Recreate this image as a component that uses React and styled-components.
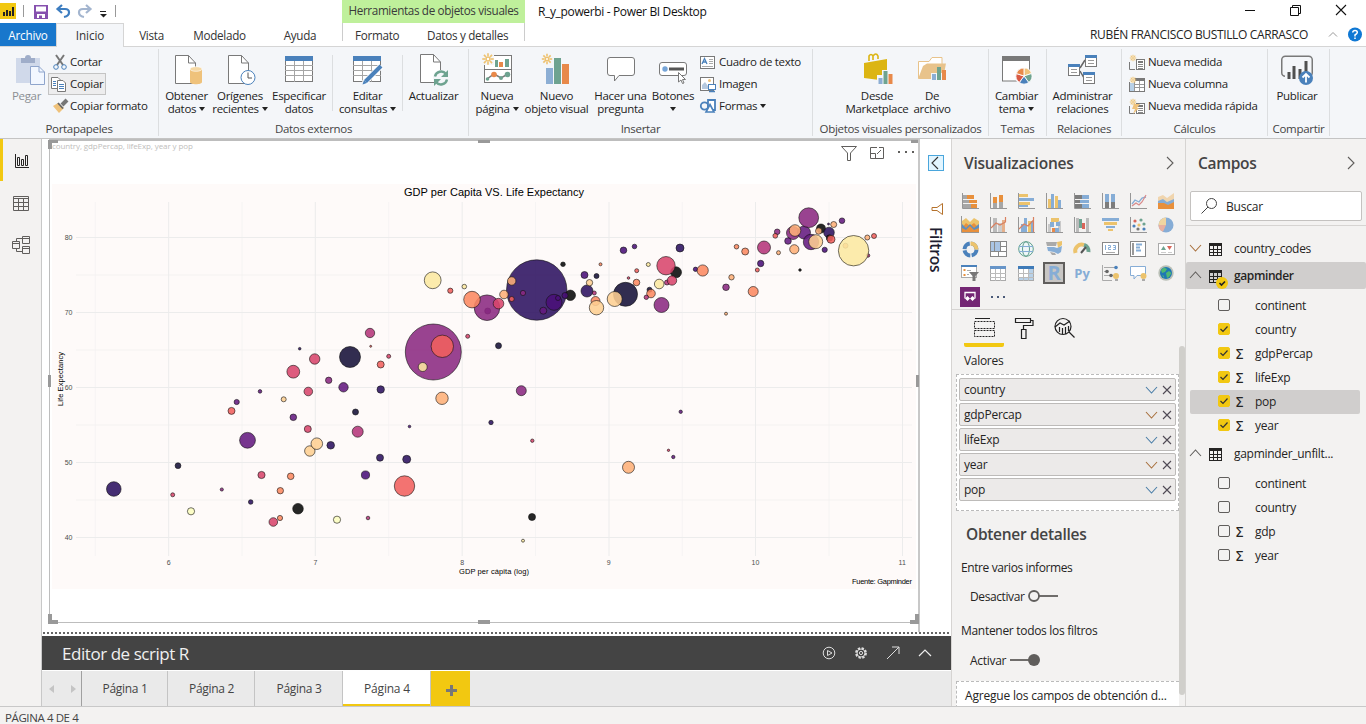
import React from 'react';
import styled, { createGlobalStyle, css } from 'styled-components';

const Global = createGlobalStyle`
  * { box-sizing: border-box; }
  body { margin: 0; background: #fff; overflow: hidden; }
  #root { font-family: "Open Sans", "Noto Sans", sans-serif; font-size: 12px; color: #252423; }
  svg { display: block; flex: none; overflow: visible; }
`;

const C = {
  yellow: '#f2c811', ribbon: '#f4f6f9', panel: '#f3f2f1', line: '#c8c8c8',
  blue: '#4a81bb', green: '#6ea390', orange: '#e8894a', sand: '#efc27b', gray: '#797979',
  lb: '#8caed4', vo: '#e8903c', vg: '#a6a6a6', vy: '#ecc36c', vb: '#86add6',
};

/* ---------- shell ---------- */
const Shell = styled.div`width: 1366px; height: 724px; display: flex; flex-direction: column; background: #fff;`;
const Label = styled.span`
  white-space: nowrap; display: inline-block; letter-spacing: ${p => p.$ls ?? -0.3}px;
  ${p => p.$size && css`font-size: ${p.$size}px;`}
  ${p => p.$color && css`color: ${p.$color};`}
  ${p => p.$weight && css`font-weight: ${p.$weight};`}
`;
const TitleBar = styled.header`height: 23px; display: flex; flex: none;`;
const QuickAccess = styled.div`width: 342px; display: flex; align-items: flex-start;`;
const ContextTitle = styled.div`
  width: 183px; background: #bff09b; color: #3a3a3a; display: flex; align-items: center; justify-content: center; padding-bottom: 4px;
`;
const DocTitle = styled.div`padding: 0 0 0 13px; width: 720px; display: flex; align-items: center; color: #111;`;
const WindowButtons = styled.div`display: flex; align-items: center; padding-bottom: 3px;`;
const TabRow = styled.nav`height: 24px; display: flex; flex: none; border-bottom: 1px solid #d5d5d5;`;
const RibbonTab = styled.div`
  width: ${p => p.$w}px; height: 23px; display: flex; align-items: center; justify-content: center; color: #333; font-size: 11.7px;
  ${p => p.$file && css`background: #1877cc; color: #fff;`}
  ${p => p.$active && css`height: 24px; background: ${C.ribbon}; border: 1px solid #d5d5d5; border-bottom: 0; padding-bottom: 2px;`}
`;
const ContextTabs = styled.div`
  display: flex; width: 183px; height: 18px; border-left: 1px solid #ccc; border-right: 1px solid #ccc;
`;
const Account = styled.div`margin-left: auto; display: flex; align-items: center; padding-right: 4px;`;

/* ---------- ribbon ---------- */
const Ribbon = styled.section`height: 92px; background: ${C.ribbon}; display: flex; flex: none; border-bottom: 1px solid #c4c4c4; padding: 2px 0;`;
const Group = styled.div`
  width: ${p => p.$w}px; border-right: 1px solid #dcdee0; display: flex; flex-direction: column; flex: none; height: 87px;
`;
const GroupBody = styled.div`flex: 1; display: flex; padding-left: ${p => p.$pl || 0}px;`;
const GroupName = styled.div`height: 14px; text-align: center; line-height: 14px; font-size: 11.5px; color: #444; display: flex; justify-content: center;`;
const BigButton = styled.div`
  width: ${p => p.$w}px; flex: none; display: flex; flex-direction: column; align-items: center; font-size: 11.5px; line-height: 13px; padding-top: 5px;
  color: ${p => (p.$off ? '#8b8f94' : '#222')};
`;
const BigIcon = styled.div`height: 33px; margin-bottom: 2px;`;
const Line = styled.div`display: flex; align-items: center; height: 13px; gap: 3px; white-space: nowrap;`;
const Caret = styled.i`border: 3.5px solid transparent; border-top: 4px solid #222; border-bottom: 0; display: block; flex: none;`;
const Divider = styled.div`width: 1px; height: 56px; margin-top: 6px; background: #dcdee0;`;
const SmallList = styled.div`display: flex; flex-direction: column; padding-top: 2px; margin-left: ${p => p.$ml || 0}px;`;
const SmallButton = styled.div`
  height: 22px; display: flex; align-items: center; gap: ${p => p.$gap ?? 4}px; font-size: 11.5px; padding: 0 4px; align-self: flex-start; border: 1px solid transparent;
  & > span { margin-top: -2px; }
  ${p => p.$hot && css`background: #ededee; border-color: #c4c4c4; padding: 0 2px;`}
`;

/* ---------- workspace ---------- */
const Work = styled.main`height: 567px; display: flex; flex: none;`;
const Rail = styled.aside`width: 42px; background: ${C.panel}; border-right: 1px solid ${C.line}; flex: none;`;
const RailItem = styled.div`
  height: 42px; border-left: 3px solid ${p => (p.$on ? C.yellow : 'transparent')}; display: flex; align-items: center; justify-content: center; padding: 2px ${p => (p.$on ? 0 : 2)}px 0 0;
`;
const Center = styled.div`width: 909px; display: flex; flex-direction: column; flex: none;`;
const CanvasRow = styled.div`height: 493px; display: flex;`;
const Page = styled.div`width: 878px; padding-left: 7px; border-right: 2px solid ${C.line}; flex: none;`;
const Frame = styled.div`position: relative; height: 484px; border: 1px solid #bdbdbd; border-top: 2px solid #bdbdbd; border-right: 0;`;
const Handle = styled.i`position: absolute; background: #999; width: ${p => p.$w}px; height: ${p => p.$h}px; left: ${p => p.$x}px; top: ${p => p.$y}px;`;
const FrameHead = styled.div`display: flex; height: 43px; padding: 0 4px 0 2px; justify-content: space-between; line-height: 9px;`;
const HeadIcons = styled.div`display: flex; gap: 13px; padding-top: 5px;`;
const FilterPane = styled.div`width: 31px; display: flex; flex-direction: column; align-items: center; padding-top: 16px;`;
const Vertical = styled.div`writing-mode: vertical-rl; font-size: 15.5px; font-weight: 600; color: #1d1d30; margin: 12px 0 0 1px; line-height: 16px; letter-spacing: -0.2px;`;
const Collapse = styled.div`width: 16px; height: 16px; background: #e2f5ff; border: 1px solid #4aa6dc; display: flex; align-items: center; justify-content: center; margin-bottom: 32px;`;
const Dots = styled.div`height: 4px; background: repeating-linear-gradient(90deg, #666 0 2px, #fff 2px 4px) 1px 0 / auto 2px no-repeat;`;
const EditorBar = styled.div`height: 34px; background: #444; color: #f0f0f0; display: flex; align-items: center; justify-content: space-between; padding: 0 19px 0 20px;`;
const EditorIcons = styled.div`display: flex; gap: 18px;`;
const PageTabs = styled.div`height: 36px; border-top: 1px solid #fff; background: #eaeaea; display: flex;`;
const PageTab = styled.div`
  width: ${p => p.$w}px; border-right: 1px solid ${p => (p.$nav ? '#a0a0a0' : '#c4c4c4')}; display: flex; align-items: center; justify-content: center; color: #444; gap: 17px; padding-left: 1px;
  ${p => p.$on && css`background: #fff; box-shadow: inset 0 -2px ${C.yellow};`}
  ${p => p.$add && css`background: ${C.yellow}; border: 0; padding-top: 4px;`}
`;

/* ---------- side panels ---------- */
const Panel = styled.aside`width: ${p => p.$w}px; flex: none; background: ${C.panel}; border-left: 1px solid #d6d4d2; overflow: hidden;`;
const PanelHead = styled.div`height: ${p => p.$h}px; padding: 0 9px 2px 12px; display: flex; align-items: center; justify-content: space-between;`;
const Gallery = styled.div`
  display: grid; grid-template-columns: repeat(8, 28px); grid-auto-rows: 24px; justify-items: center; align-items: center; padding-left: 4px; height: 121px; border-bottom: 1px solid #d6d4d2;
`;
const Picked = styled.div`width: 22px; height: 22px; background: #c8c6c4; border: 2px solid #605e5c; display: flex; align-items: center; justify-content: center;`;
const Glyph = styled.span`color: ${C.vb}; font-weight: 700; font-size: ${p => p.$s}px; line-height: 16px; padding-bottom: 1px;`;
const PurpleTile = styled.div`width: 20px; height: 20px; background: #742774; display: flex; align-items: center; justify-content: center;`;
const ModeTabs = styled.div`display: flex; height: 37px; padding: 0 12px;`;
const Mode = styled.div`width: 40px; display: flex; justify-content: center; align-items: flex-start; padding-top: 8px; border-bottom: 4px solid ${p => (p.$on ? C.yellow : 'transparent')}; border-radius: 2px;`;
const Scroller = styled.div`display: flex; justify-content: space-between;`;
const ScrollBody = styled.div`width: 227px; padding-left: 4px;`;
const Thumb = styled.div`width: 6px; height: 349px; border-radius: 3px; background: #d0cfcb; margin-top: -1px;`;
const WellTitle = styled.div`padding: 5px 0 0 8px; height: 27px; & > span { margin-top: -1px; }`;
const Well = styled.div`
  border: 1px dashed #bbb; border-right-width: ${p => (p.$full ? 0 : 1)}px; background: #fff; width: 223px; height: ${p => p.$h}px; padding: 3px 2px; display: flex; flex-direction: column; gap: 2px;
`;
const Pill = styled.div`height: 23px; background: #eceae9; border: 1px solid #bdbbb9; border-radius: 2px; display: flex; align-items: center; padding: 0 4px 0 4px; gap: 6px; & > span { margin-top: -1px; }`;
const Grow = styled.span`flex: 1;`;
const Drill = styled.div`display: flex; flex-direction: column; padding-left: 5px;`;
const DrillTitle = styled.div`height: 48px; padding: 0 0 2px 5px; display: flex; align-items: center; font-size: 15.5px; font-weight: 600; color: #444;`;
const DrillRow = styled.div`height: ${p => p.$h}px; padding-left: ${p => p.$pl || 0}px; display: flex; align-items: center; gap: 4px;`;
const Search = styled.div`height: 30px; margin: 3px 4px 0; border: 1px solid #c4c2c0; border-radius: 2px; background: #fff; display: flex; align-items: center; gap: 8px; padding-left: 10px;`;
const FieldList = styled.div`border-top: 1px solid #d6d4d2; margin-top: 4px; padding-top: 9px;`;
const TableRow = styled.div`
  height: 27px; display: flex; align-items: center; padding: 0 0 1px 4px; gap: 8px; margin: ${p => p.$mt || 0}px 0 ${p => p.$mb || 0}px; border-radius: 2px;
  ${p => p.$on && css`background: #d0cecd;`}
`;
const TableIcon = styled.div`position: relative; margin: 2px 4px 0 0;`;
const Badge = styled.div`position: absolute; left: 7px; top: 7px;`;
const FieldRow = styled.div`
  height: 24px; margin: 0 6px 0 4px; padding-left: 28px; display: flex; align-items: center; border-radius: 2px;
  & > span:last-child { margin-top: -1px; }
  ${p => p.$on && css`background: #d0cecd;`}
`;
const Check = styled.div`
  width: 12px; height: 12px; border-radius: 2px; border: 1px solid ${p => (p.$on ? C.yellow : '#605e5c')}; background: ${p => (p.$on ? C.yellow : 'transparent')}; margin-bottom: 2px;
  display: flex; align-items: center; justify-content: center;
`;
const Sigma = styled.span`width: 25px; padding-left: 5px; font-size: 14px; line-height: 14px; font-family: "DejaVu Sans", sans-serif;`;
const Status = styled.footer`height: 18px; flex: none; background: ${C.panel}; border-top: 1px solid ${C.line}; color: #444; padding: 3px 0 0 5px; line-height: 16px;`;

/* ---------- icon helpers ---------- */
const Svg = ({ w = 30, h = w, ox = 0, oy = 0, children }) => (
  <svg width={w} height={h} viewBox={`${ox} ${oy} ${w} ${h}`} fill="none">{children}</svg>
);
const R = ({ x, y, w, h, f, s }) => <rect x={x} y={y} width={w} height={h} fill={f || 'none'} stroke={s} />;
const P = ({ d, s = C.gray, f = 'none', w = 1 }) => <path d={d} stroke={s} fill={f} strokeWidth={w} />;
const Chev = ({ dir = 'down', c = '#605e5c', w = 11 }) => {
  const d = { down: 'M0 0L5.5 6L11 0', up: 'M0 6L5.5 0L11 6', right: 'M2 0L8 6L2 12', left: 'M8 0L2 6L8 12' }[dir];
  return <Svg w={w} h={dir === 'right' || dir === 'left' ? 12 : 6}><P d={d} s={c} w={1.1} /></Svg>;
};
const Spark = ({ x, y, r = 5, c = '#eec270' }) => (
  <g stroke={c} strokeWidth={r > 4 ? 1.6 : 1}>
    <circle cx={x} cy={y} r={r * 0.4} fill="#fff" />
    {[0, 45, 90, 135, 180, 225, 270, 315].map(a => <path key={a} d={`M${x + r * 0.6} ${y}H${x + r * 1.15}`} transform={`rotate(${a} ${x} ${y})`} />)}
  </g>
);
const Doc = () => <><P d="M2.5 .5H15.5L22.5 8V28.5H2.5Z" f="#fff" /><P d="M15.5 .5V8H22.5" /></>;
const Bars3 = ({ x, y }) => <><R x={x} y={y + 7} w={4} h={6} f={C.lb} /><R x={x + 5} y={y} w={4} h={13} f={C.green} /><R x={x + 10} y={y + 3} w={4} h={10} f={C.orange} /></>;
const GridBase = () => (
  <><R x={.5} y={2.5} w={27} h={25} f="#fff" s={C.gray} /><R x={0} y={2} w={28} h={5} f={C.blue} />
    <P d="M0 11.5H28M0 16.5H28M0 21.5H28M9.5 7V28M18.5 7V28" s="#a5a5a5" /></>
);

const big = {
  paste: <Svg ox={-3}><R x={1} y={4} w={24} h={25} f="#d0d9ea" /><path d="M6 4h4a3 3 0 0 1 6 0h4v5H6z" fill="#9fadc9" /><P d="M15.5 12.5H24L29.5 18V30.5H15.5Z" s="#8fa5cc" f="#f2f7ff" /><P d="M24 12.5V18H29.5" s="#8fa5cc" /></Svg>,
  get: <Svg ox={-1} oy={-1}><Doc /><path d="M17 14v13c0 3 12 3 12 0V14z" fill={C.sand} /><ellipse cx="23" cy="14" rx="6" ry="2.3" fill="#f5d8a4" stroke="#fff" strokeWidth=".6" /></Svg>,
  recent: <Svg ox={-1} oy={-1}><Doc /><circle cx="22" cy="22.500" r="7" fill="#fff" stroke={C.blue} /><P d="M22 17.500V23H26" s="#555" /></Svg>,
  specify: <Svg w={28} h={30}><GridBase /></Svg>,
  edit: <Svg w={30}><GridBase /><P d="M11 29L28 12" s="#fff" w={6} /><P d="M12.5 27.5L28 12" s={C.blue} w={4} /><path d="M9.500 30.500L11 26l3 3z" fill={C.blue} /></Svg>,
  refresh: <Svg w={28} oy={-1}><g transform="translate(-2,-1)"><Doc /></g><circle cx="21" cy="23" r="8" fill={C.ribbon} /><P d="M15 21.500A6.200 6.200 0 0 1 26 19M27 24.500A6.200 6.200 0 0 1 16 27" s={C.green} w={2.4} /><path d="M28 15v7h-7zM14 31v-7h7z" fill={C.green} /></Svg>,
  page: <Svg w={29}><R x={1.5} y={1.500} w={27} h={27} f="#fff" s={C.gray} /><P d="M1 15.500H29" /><R x={12} y={6} w={3} h={7} f={C.green} /><R x={16} y={8} w={4} h={5} f={C.orange} /><R x={22} y={5} w={4} h={8} f={C.green} /><P d="M4 25L11 20L18 24L25 20" w={1.5} /><circle cx="4.500" cy="25" r="1.800" fill={C.green} /><circle cx="11" cy="20.500" r="2.800" fill={C.orange} /><circle cx="18" cy="24" r="2" fill={C.green} /><circle cx="24.500" cy="20.500" r="2.800" fill={C.green} /><rect x="-1" y="-1" width="12" height="12" fill={C.ribbon} /><Spark x={5} y={5} /></Svg>,
  visual: <Svg w={28} ox={1} oy={-1}><R x={4} y={13} w={7} h={16} f={C.lb} /><R x={12} y={3} w={7} h={26} f={C.green} /><R x={20} y={9} w={7} h={20} f={C.orange} /><Spark x={5} y={4} r={4.500} /></Svg>,
  ask: <Svg w={28}><P d="M3 3.500H25Q27.500 3.500 27.500 6V19Q27.500 21.500 25 21.500H12L7.500 27V21.500H3Q.500 21.500 .500 19V6Q.500 3.500 3 3.500Z" f="#fff" /></Svg>,
  buttons: <Svg w={28}><rect x=".5" y="8.500" width="27" height="13" rx="2.500" fill="#fff" stroke={C.gray} /><circle cx="6" cy="15" r="2.700" fill="#76a5d8" /><R x={10} y={13.500} w={15} h={3} f="#555" /><P d="M19.500 18.500V28L22 26L23.500 29.500L25 29L23.500 25.500H26.500Z" f="#fff" /></Svg>,
  market: <Svg oy={1}><P d="M7 8V3Q9 0 11 3V7M11 3Q14 -1 16 3V6" s="#dcb513" w={1.6} /><path d="M2 10L25 6V28L2 25z" fill="#dcb513" /><rect x="15" y="22" width="16" height="10" fill={C.ribbon} /><rect x="20" y="17" width="6" height="5" fill={C.ribbon} /><Bars3 x={16.500} y={18} /></Svg>,
  file: <Svg ox={1}><path d="M2.500 24V7.500H13L16 3.500H26V10" fill="#fff" stroke="#e8c38b" /><path d="M2 25L7 12L11 9.500H30L27 25z" fill="#e8c38b" /><rect x="15" y="19" width="16" height="9" fill={C.ribbon} /><Bars3 x={16} y={13} /></Svg>,
  theme: <Svg><R x={.5} y={3} w={27} h={24} f="#fff" s={C.gray} /><R x={0} y={2} w={28} h={5} f={C.gray} /><circle cx="22" cy="22.500" r="9" fill={C.ribbon} />{[C.sand, C.green, C.blue, '#d95a45', C.orange].map((c, i) => <path key={i} d="M22 22V14A8 8 0 0 1 29.600 19.500Z" fill={c} stroke="#fff" strokeWidth=".8" transform={`rotate(${i * 72} 22 22)`} />)}</Svg>,
  relate: <Svg w={29} oy={-1}><P d="M12 13L17 5M12 16L16 23" s="#666" w={1.5} />{[[0, 9], [17, 0], [15, 17]].map(([x, y]) => <g key={x}><R x={x + .5} y={y + .5} w={11} h={11} f="#fff" s={C.gray} /><R x={x} y={y} w={12} h={3} f={C.blue} /><P d={`M${x + 3} ${y + 5.500}H${x + 9}M${x + 3} ${y + 8.500}H${x + 9}`} s="#999" /></g>)}</Svg>,
  publish: <Svg w={32}><rect x=".75" y="2.250" width="30.500" height="20" rx="3.500" fill="none" stroke={C.gray} strokeWidth="1.500" /><P d="M4 22.300H26" s={C.ribbon} w={2.500} /><P d="M8 18V25M13 12V25M19 15V25M25 7V20" s="#505050" w={3} /><circle cx="25" cy="24" r="7" fill={C.blue} /><P d="M25 28.500V20M21.500 23.500L25 20L28.500 23.500" s="#fff" w={1.8} /></Svg>,
};

const sm = {
  cut: <Svg w={15}><P d="M3 0L10 10M11 0L4 10" s="#777" w={2} /><circle cx="3" cy="12" r="2.300" stroke={C.blue} /><circle cx="11" cy="12" r="2.300" stroke={C.blue} /></Svg>,
  copy: <Svg w={15}><P d="M.5 .5H7L9.500 3V11.500H.500Z" f="#fff" /><P d="M6.500 3.500H12L14.500 6V14.500H6.500Z" f="#fff" /><P d="M2 4.500H5M2 6.500H5M2 8.500H5M8 7.500H13M8 9.500H13M8 11.500H13" s={C.blue} /></Svg>,
  brush: <Svg w={15}><P d="M9 6L14 1" s="#777" w={4} /><path d="M0 7L5 4L11 9L6 14z" fill={C.sand} /><P d="M5 4L10 9.500" s="#666" w={1.800} /></Svg>,
  text: <Svg w={15} h={13}><R x={.5} y={.5} w={14} h={12} f="#fff" s={C.gray} /><P d="M2 8L4.500 2.500L7 8M3 6H6" s={C.blue} w={1.300} /><P d="M9 3.500H13M9 5.500H13M9 7.500H13M2 10.500H13" s="#aaa" /></Svg>,
  image: <Svg w={16} h={15}><R x={.5} y={.5} w={13} h={13} f="#fff" s={C.gray} /><circle cx="9.500" cy="3.500" r="1.500" fill={C.sand} /><path d="M2 12V8l3-3 3 4v3z" fill="#b6c9df" /><R x={8.500} y={7.500} w={7} h={5} f="#fff" s={C.blue} /><P d="M12 12V14.500M9 14.500H15" s={C.blue} w={1.300} /></Svg>,
  shapes: <Svg w={16} h={14}><circle cx="4.500" cy="7" r="3.700" stroke={C.blue} strokeWidth="1.800" /><P d="M8 1H15V11H8Z" f="#fff" s={C.blue} w={1.800} /><path d="M10 5.500L14 13H6z" fill="#fff" stroke={C.blue} strokeWidth="1.600" /></Svg>,
  measure: k => <Svg w={16} h={15}><P d="M.5 7V14.500H6" /><R x={7.500} y={4.500} w={8} h={10} f="#fff" s={C.gray} /><R x={9} y={6} w={5} h={2} f={C.gray} /><P d="M9 9.500H14M9 11.500H14M9 13.500H14" s="#888" w={1} /><Spark x={4} y={3} r={2.800} />{k && <path d="M5 5h6l-3 4h2l-6 6 2-5H3z" fill={C.sand} />}</Svg>,
  column: <Svg w={16} h={15}><R x={.5} y={3.500} w={15} h={11} f="#fff" s={C.gray} /><R x={6} y={1} w={10} h={3} f={C.gray} /><R x={1} y={6} w={4} h={8} f="#b8d1e8" /><P d="M5.500 4V14M10.500 4V14M6 7.500H15M6 10.500H15" s="#999" /><rect x="0" y="0" width="6" height="5" fill={C.ribbon} /><Spark x={4} y={3} r={2.800} /></Svg>,
};

/* ---------- visualization gallery ---------- */
const Axis = ({ children }) => <Svg w={17} h={17}><g>{children}</g><P d="M.5 0V15.500H17" s="#969696" /></Svg>;
const hb = (rows, key) => <Axis key={key}>{rows.map(([x, y, w, c, h = 3], i) => <R key={i} x={x} y={y} w={w} h={h} f={c} />)}</Axis>;
const vbars = (cols, key, extra) => <Axis key={key}>{cols.map(([x, y, h, c, w = 4], i) => <R key={i} x={x} y={y} w={w} h={h} f={c} />)}{extra}</Axis>;
const G = C.vg, O = C.vo, B = C.vb, Y = C.vy, D = '#7c7c7c';
const gallery = [
  hb([[1, 2, 5, G, 4], [5, 2, 7, O, 4], [1, 7, 8, G, 3], [7, 7, 8, O, 3], [1, 11, 9, G, 4], [9, 11, 6, O, 4]], 1),
  vbars([[3, 4, 6, O], [3, 10, 5, G], [9, 2, 8, O], [9, 9, 6, G]], 2),
  hb([[1, 1, 9, Y], [1, 5, 15, B], [1, 9, 11, Y], [1, 12, 9, B, 2]], 3),
  vbars([[2, 6, 9, Y, 3], [5, 1, 14, B, 3], [9, 3, 12, Y, 3], [12, 7, 8, B, 3]], 4),
  hb([[1, 2, 7, D, 4], [8, 2, 7, B, 4], [1, 7, 5, D, 3], [6, 7, 9, B, 3], [1, 11, 7, D, 4], [8, 11, 7, B, 4]], 5),
  vbars([[3, 1, 9, B, 4], [3, 9, 6, D, 4], [9, 1, 8, B, 4], [9, 9, 6, D, 4]], 6),
  <Axis key={7}><P d="M2 11L5 7L9 9L12 5L16 4" s={B} w={1.300} /><P d="M2 13L6 10L9 12L12 9L16 2" s="#d98a8a" w={1.200} /></Axis>,
  <Svg key={8} w={17}><path d="M0 4L5 2L9 5L16 0V9H0z" fill="#f0d5ae" /><path d="M0 8L5 6L9 9L16 6V13H0z" fill={B} /><path d="M0 10L6 10L10 12L16 9V16H0z" fill={O} /></Svg>,
  <Svg key={9} w={18}><path d="M1 5L5 2L9 6L13 2L18 5V16H1z" fill={Y} /><path d="M1 12L5 7L9 10L13 7L18 12V16H1z" fill={O} /><path d="M1 8L5 12L9 8L13 12L18 8V12L13 14L9 10L5 14L1 12z" fill="#5c8fc0" /><P d="M.5 0V16.500H18" s="#969696" /></Svg>,
  vbars([[3, 1, 14, '#bbb'], [8, 6, 9, '#ccc'], [12, 3, 12, '#e6b08a', 3]], 10, <P d="M1 11L6 6L10 8L15.500 5V0" s="#d98060" w={1.200} />),
  vbars([[3, 7, 8, B, 3], [6, 1, 14, B, 3], [10, 4, 11, Y, 3], [13, 4, 11, B, 2]], 11, <P d="M1 12L6 7L10 9L15.500 3V15M15.500 0V5" s="#d98060" w={1.200} />),
  vbars([[2, 7, 8, '#c9c9c9', 3], [5, 1, 4, Y], [9, 1, 4, Y], [12, 4, 11, '#c9c9c9', 3], [4, 5, 5, B, 4], [10, 5, 4, B, 4], [6, 11, 4, '#e8894a', 3], [9, 11, 4, B, 4]], 12),
  vbars([[2, 1, 14, '#bbb', 3], [5, 2, 9, '#6ea390', 3], [8, 6, 6, '#d9655a', 3], [12, 1, 14, '#bbb', 3]], 13),
  <Svg key={14} w={17}><R x={0} y={1} w={17} h={3} f={B} /><R x={2} y={5} w={13} h={3} f={Y} /><R x={4} y={9} w={9} h={2} f={B} /><R x={6} y={12} w={5} h={2} f={Y} /></Svg>,
  <Axis key={15}>{[[5, 4, '#d9655a'], [11, 3, C.green], [4, 9, C.blue], [9, 8, Y], [14, 7, C.green], [8, 12, '#777'], [14, 12, C.blue]].map(([x, y, c]) => <circle key={x + y * 20} cx={x} cy={y} r="1.600" fill={c} />)}</Axis>,
  <Svg key={16} w={17}><circle cx="8" cy="8" r="7.500" fill={B} /><path d="M8 8V.500A7.500 7.500 0 0 0 .500 8z" fill="#f0d5a0" /><path d="M8 8H.500A7.500 7.500 0 0 0 5 14.800z" fill="#e8b0a0" /></Svg>,
  <Svg key={17} w={17}><circle cx="8.500" cy="8.500" r="6" stroke={C.blue} strokeWidth="4" strokeDasharray="8 1.400" /><path d="M8.500 2.500A6 6 0 0 1 14.500 8.500" stroke={Y} strokeWidth="4" /></Svg>,
  <Svg key={18} w={17}><R x={.5} y={.5} w={16} h={15} f="#fff" s="#888" /><R x={1} y={1} w={9} h={9} f="#a9c4e4" /><P d="M10.500 0V10M0 10.500H17M4.500 0V10M8.500 10V16M10 5.500H17" s="#888" /></Svg>,
  <Svg key={19} w={17}><circle cx="8" cy="8" r="7.300" stroke="#5fa08c" fill="#eef6f8" /><ellipse cx="8" cy="8" rx="3.500" ry="7.300" stroke="#5fa08c" /><P d="M1 5.500H15M1 10.500H15" s={B} /></Svg>,
  <Svg key={20} w={17}><path d="M0 1H11L10 5H1z" fill="#aaa" /><path d="M11 1L16 0V4L12 7z" fill={Y} /><path d="M1 6H8L11 7L16 5L15 11L12 13L8 11L2 10z" fill={B} /><path d="M4 11L9 12L10 14L6 14z" fill="#aaa" /></Svg>,
  <Svg key={21} w={18}><path d="M2.500 13A6.500 6.500 0 0 1 11 5" stroke={Y} strokeWidth="4" /><path d="M11 5A6.500 6.500 0 0 1 15.500 12" stroke={C.green} strokeWidth="4" /><P d="M8 13L13 7" s="#555" w={2} /></Svg>,
  <Svg key={22} w={17}><R x={.5} y={1.500} w={16} h={12} f="#fff" s="#888" /><P d="M3.500 4V9M6 4.500H8.500V6.500H6.500V8.500H9M11 4.500H13.500V8.500H11M11.500 6.500H13.500" s={B} /><P d="M4 11.500H13" s="#aaa" /></Svg>,
  <Svg key={23} w={17}><R x={.5} y={.5} w={15} h={15} f="#fff" s="#888" /><R x={2} y={2} w={2} h={12} f="#999" /><P d="M6 3.500H12M6 6.500H10M6 9.500H11" s={B} w={2} /></Svg>,
  <Svg key={24} w={17}><R x={.5} y={2.500} w={16} h={11} f="#fff" s="#aaa" /><path d="M3 9l2.500-4L8 9z" fill={C.green} /><path d="M9 5h5l-2.500 4z" fill="#d9655a" /><P d="M3 11.500H8M10 11.500H14" s="#ccc" /></Svg>,
  <Svg key={25} w={18}><R x={.5} y={1.500} w={15} h={12} f="#fff" s="#aaa" /><R x={0} y={1} w={16} h={2} f={C.blue} /><P d="M3.500 5V7M3.500 10V12" s={O} w={2} /><P d="M6 6.500H10M6 10.500H8" s="#aaa" /><path d="M8 8H18L14.500 12V17H11.500V12z" fill="#777" /></Svg>,
  <Svg key={26} w={16}><R x={.5} y={1.500} w={15} h={14} f="#fff" s="#aaa" /><R x={0} y={1} w={16} h={3} f="#6795c8" /><P d="M0 8.500H16M0 12.500H16M5.500 4V16M10.500 4V16" s="#bbb" /></Svg>,
  <Svg key={27} w={16}><R x={.5} y={1.500} w={15} h={14} f="#fff" s="#aaa" /><R x={0} y={1} w={16} h={3} f="#3f7bb8" /><R x={11} y={4} w={4} h={11} f="#b8d1e8" /><R x={1} y={12} w={14} h={3} f="#b8d1e8" /><P d="M0 8.500H16M0 12.500H16M5.500 4V16M10.500 4V16" s="#bbb" /></Svg>,
  <Picked key={28}><Glyph $s={20}>R</Glyph></Picked>,
  <Glyph key={29} $s={13}>Py</Glyph>,
  <Svg key={30} w={17}><P d="M.5 0V15.500H10" s="#aaa" /><P d="M2 2.500H14M2 6.500H6M2 10.500H11" s="#aaa" /><circle cx="14" cy="2.500" r="1.800" fill={C.blue} /><circle cx="5" cy="6.500" r="1.800" fill="#666" /><circle cx="9" cy="10.500" r="1.800" fill="#666" /><circle cx="14" cy="11" r="3" fill={Y} /><R x={13} y={14} w={3} h={2} f="#aaa" /></Svg>,
  <Svg key={31} w={17}><P d="M.5 1.500H15.500V10.500H7L4 14V10.500H.500Z" s={B} f="#fff" /><circle cx="13.500" cy="11" r="3" fill={Y} /><R x={12} y={14} w={3} h={2} f="#aaa" /></Svg>,
  <Svg key={32} w={17}><circle cx="8" cy="8" r="7.700" fill="#b9bfb6" /><circle cx="8" cy="8" r="6" fill="#1f78b4" /><path d="M3 5L6 2.500L9 4L7 7L4 8zM8 8L11 6L13.500 8L11 12L9 13zM4 10L6 11L6 13z" fill="#4fb873" /></Svg>,
  <PurpleTile key={33}><Svg w={12} h={10}><P d="M1 6.500V.500H11V6.500" s="#fff" w={1.300} /><path d="M3.500 4L6 6.500L3.500 9L1 6.500zM8.500 4L11 6.500L8.500 9L6 6.500z" fill="#fff" /></Svg></PurpleTile>,
  <Svg key={34} w={16} h={2}><path d="M1 0h2v2H1zM7 0h2v2H7zM13 0h2v2h-2z" fill="#4a5a78" /></Svg>,
];

/* ---------- bubble chart ---------- */
const K = { k: '#080808', n: '#161038', i: '#2c1160', p: '#4a1079', v: '#641a80', m: '#8b2981', g: '#b5367a', r: '#d8456c', s: '#f1605d', o: '#fc8961', l: '#feaf77', t: '#fecf92', c: '#fce8a0', w: '#fcfdbf' };
const bubbles = [
  [536.7, 290, 30.2, 'i'], [433.3, 352, 28, 'm'], [442.3, 346.3, 11.2, 's'], [422.7, 367, 4.5, 'c'], [442, 398.3, 6.2, 'l'], [521.3, 390.7, 5, 'm'],
  [432.7, 280.3, 8.4, 'c'], [450.3, 290.7, 2.6, 's'], [464.3, 286.600, 2.300, 'c'], [487.7, 311, 3, 'v'], [487, 307.7, 12.8, 'm'], [472, 299.600, 8.300, 'o'], [498.500, 303.600, 5.300, 'r'],
  [504, 294.500, 4.300, 'l'], [511.700, 281, 4.200, 'l'], [511.700, 299, 2.500, 's'], [523, 293, 2.600, 'm'], [554, 302.300, 8, 'p'], [558, 298, 2.500, 'p'], [543.300, 310.700, 3.500, 'v'], [570.300, 295.300, 5.200, 'k'], [565, 295.500, 3, 'p'],
  [563, 264.300, 2.300, 'k'], [498.500, 345.700, 3, 'n'], [467.700, 336.300, 2, 'r'], [584.500, 275, 3.500, 'p'], [596.500, 276, 2.500, 'n'], [587, 291, 6, 'i'], [589.500, 282.700, 3.200, 't'], [594.300, 293, 2, 'g'], [595.500, 301, 4.500, 'o'], [596.500, 307.700, 7.200, 't'],
  [600.500, 264.300, 1.500, 'o'], [623.500, 250.300, 3.300, 'p'], [634.500, 246.500, 2.300, 'p'], [636.700, 270.700, 2, 's'], [628.500, 278, 1.300, 'r'], [636.500, 282.500, 3.300, 'o'], [648.300, 264.500, 2, 'c'], [625.500, 294.300, 12, 'n'], [614.700, 299, 7.500, 't'],
  [649.500, 289.700, 2.500, 'n'], [651, 293.500, 4.300, 'o'], [646.300, 297.300, 2.200, 'g'], [661.500, 305, 7.500, 'm'], [659.200, 284, 4.800, 'c'], [667, 282.500, 2.500, 'g'], [676, 272.300, 5.500, 'k'], [672, 280.500, 4.700, 'r'], [666, 265.700, 9.200, 'r'],
  [680, 248, 4, 'i'], [695.500, 269.300, 2.200, 'p'], [702.700, 270.500, 5.600, 'o'], [736.500, 246.700, 2.300, 'o'], [745.200, 251.500, 3.500, 'o'], [764, 247.500, 6.500, 'g'], [778.500, 252.700, 2, 'l'], [760.700, 263.500, 3.200, 'p'], [757.300, 270, 2, 's'], [731.500, 277.300, 2.700, 'l'], [726, 287.300, 3.300, 'm'], [753.200, 291.500, 5, 'o'], [726, 313.700, 1.500, 'l'],
  [777.200, 231.800, 2.800, 'm'], [775.300, 235.800, 2.400, 's'], [793, 233, 6.500, 'm'], [804, 232.500, 6.500, 'v'], [808.700, 217.700, 9.900, 'm'], [795, 230.500, 5.800, 'l'], [788, 241, 3.300, 'v'], [794.300, 249.300, 4.600, 'l'], [811, 242, 7.700, 'v'], [815.700, 241.700, 7, 't'],
  [821, 228.500, 4.500, 'k'], [818.700, 231, 3.200, 'l'], [828.500, 224, 1, 'p'], [833.700, 224.500, 3, 'l'], [842, 220.700, 2.800, 'v'], [829, 232.500, 5.300, 'i'], [829.500, 238, 3.200, 'k'], [831, 239.300, 4, 's'], [824.700, 249.800, 2.600, 'p'],
  [868, 255.500, 1.800, 'g'], [845.500, 245.700, 2.500, 'o'], [853.600, 250.700, 15.200, 'c'], [867.300, 237.500, 2.500, 'l'], [874, 236, 2.500, 's'], [800, 270, 1.300, 'k'],
  [299.700, 348.700, 1.300, 'i'], [314.700, 359, 5.200, 'r'], [293.300, 371.700, 6.400, 'r'], [328.700, 380.300, 3.200, 'm'], [308.300, 391.500, 4.300, 'r'], [260, 391.400, 1.800, 'v'], [283.700, 399.300, 2.500, 't'], [236.700, 402, 2.600, 'v'], [231.500, 410.900, 3.500, 's'], [293.300, 417.300, 3.300, 'v'],
  [350, 357, 10.500, 'n'], [370, 333, 4.700, 'g'], [370.700, 346.300, 1, 's'], [388.700, 356.300, 2, 'r'], [380.700, 364.500, 3.500, 's'], [343.500, 387.300, 4.700, 'v'], [380.700, 389.500, 3.700, 'i'], [355.500, 412, 3, 'n'], [307.800, 429, 3.500, 'r'], [357.700, 431.700, 5.500, 'g'], [409.500, 426.500, 1.300, 'p'],
  [247.500, 440.300, 7.900, 'v'], [309.800, 451, 5.200, 't'], [316.800, 443.700, 5.800, 't'], [330.700, 445.300, 3.800, 'i'], [380, 457.700, 3.500, 'i'], [406.700, 459.300, 4, 'i'], [365.500, 475, 4.100, 'p'], [404.500, 486, 10.200, 's'],
  [178, 465.700, 2.900, 'n'], [113.800, 489, 7.300, 'i'], [172.700, 494.800, 2, 'r'], [191, 511.300, 3.600, 'w'], [221.800, 489.500, 1.600, 'm'], [261.500, 475, 3.600, 'r'], [290.700, 476.300, 3.300, 'o'], [280.300, 490.700, 3.200, 'o'], [250.700, 502, 2.300, 'i'], [298, 508.700, 5.300, 'k'], [273.300, 522, 4.300, 'r'], [280, 518, 2.600, 'o'], [337, 519.700, 3.600, 'w'], [368, 518, 1.800, 'g'],
  [491, 422.500, 2.200, 'i'], [532.300, 440.700, 1.700, 'r'], [532, 517, 3.500, 'k'], [523, 540.700, 1.500, 'c'], [628.500, 467.300, 6, 'l'], [668.500, 450.300, 1.200, 'r'], [673.300, 457, 1.700, 'v'], [680.700, 411.800, 1.700, 'v'],
];
const AxisText = styled.text`font: ${p => p.$s || 7}px "Liberation Sans", Arial, sans-serif; fill: ${p => p.$c || '#4d4d4d'};`;
const ChartSvg = styled.svg`margin-left: 2px;`;
const BubbleChart = () => (
  <ChartSvg width="864" height="405" viewBox="52 184 864 405">
    <rect x="52" y="184" width="864" height="405" fill="#fefaf9" />
    {[95.300, 242, 388.700, 535.500, 682.300, 829].map(x => <path key={x} d={`M${x} 202V556`} stroke="#f4f2f2" strokeWidth=".8" />)}
    {[275, 350, 425, 500].map(y => <path key={y} d={`M76 ${y}H912`} stroke="#f2f0f0" strokeWidth=".8" />)}
    {[168.700, 315.300, 462.200, 609, 755.500, 902.500].map(x => <path key={x} d={`M${x} 202V556`} stroke="#ececec" />)}
    {[237.500, 312.500, 387.500, 462.500, 537.500].map(y => <path key={y} d={`M76 ${y}H912`} stroke="#ececec" />)}
    {bubbles.map(([x, y, r, c], i) => <circle key={i} cx={x} cy={y} r={r} fill={K[c]} fillOpacity=".88" stroke="#111" strokeOpacity=".75" strokeWidth=".8" />)}
    {[80, 70, 60, 50, 40].map((t, i) => <AxisText key={t} x="72.500" y={240 + i * 75} textAnchor="end">{t}</AxisText>)}
    {[6, 7, 8, 9, 10, 11].map((t, i) => <AxisText key={t} x={168.700 + i * 146.700} y="565" textAnchor="middle">{t}</AxisText>)}
    <AxisText $s={11} $c="#000" x="494" y="196" textAnchor="middle" textLength="180">GDP per Capita VS. Life Expectancy</AxisText>
    <AxisText $s={7.500} $c="#000" x="494" y="573.500" textAnchor="middle" textLength="70">GDP per cápita (log)</AxisText>
    <AxisText $s={7.500} $c="#000" x="912" y="584" textAnchor="end" textLength="60">Fuente: Gapminder</AxisText>
    <AxisText $s={7.500} $c="#000" transform="translate(62.500 379) rotate(-90)" textAnchor="middle" textLength="54">Life Expectancy</AxisText>
  </ChartSvg>
);

/* ---------- pieces ---------- */
const Big = ({ icon, w, lines, caret, off, ls }) => (
  <BigButton $w={w} $off={off}>
    <BigIcon>{big[icon]}</BigIcon>
    {lines.map((t, i) => <Line key={t}><Label $ls={ls}>{t}</Label>{caret && lines.length === 2 && i === 1 && <Caret />}</Line>)}
    {caret && lines.length === 1 && <Line><Caret /></Line>}
  </BigButton>
);
const Small = ({ icon, text, caret, ...rest }) => <SmallButton {...rest}>{icon}<Label>{text}</Label>{caret && <Caret />}</SmallButton>;
const RGroup = ({ w, name, pl, children }) => <Group $w={w}><GroupBody $pl={pl}>{children}</GroupBody><GroupName><Label>{name}</Label></GroupName></Group>;
const TableGlyph = () => <Svg w={13} h={13}><R x={.5} y={.5} w={12} h={12} s="#252423" /><R x={0} y={0} w={13} h={3} f="#252423" /><P d="M0 6.500H13M0 9.500H13M4.500 3V13M8.500 3V13" s="#252423" /></Svg>;
const Tick = () => <Svg w={8} h={6}><P d="M.5 3L3 5.500L7.500 .5" s="#333" w={1.200} /></Svg>;
const Field = ({ name, on, sum, hot }) => (
  <FieldRow $on={hot}><Check $on={on}>{on && <Tick />}</Check><Sigma>{sum ? 'Σ' : ''}</Sigma><Label $ls={-0.25}>{name}</Label></FieldRow>
);

export default function App() {
  return (
    <Shell>
      <Global />
      <TitleBar>
        <QuickAccess>
          <Svg w={105} h={22}>
            <R x={0} y={3} w={16} h={16} f={C.yellow} /><P d="M4 12V16M7 10V16M10 11V16M13 7V16" s="#222" w={2} />
            <P d="M23.500 5V17" s="#999" />
            <path d="M34 5H48V19H34z" fill="#8650ae" /><R x={36} y={6.500} w={10} h={5} f="#fff" /><R x={37} y={14} w={8} h={4} f="#fff" /><R x={39} y={15.500} w={3} h={2.500} f="#8650ae" />
            <P d="M62 5L57.500 9L62 13M58 9H65Q69 9 69 12.500Q69 16 64 17" s="#3d7dc0" w={2.200} />
            <P d="M86 5L90.500 9L86 13M90 9H83Q79 9 79 12.500Q79 16 84 17" s="#a3b5cf" w={2.200} />
            <P d="M100 11.500H106" s="#222" /><path d="M100 14H107L103.500 17.500z" fill="#222" />
          </Svg>
          <Svg w={12} h={22}><P d="M10.500 5V17" s="#999" /></Svg>
        </QuickAccess>
        <ContextTitle><Label $size={11.700} $ls={-0.35}>Herramientas de objetos visuales</Label></ContextTitle>
        <DocTitle><Label $ls={-0.35}>R_y_powerbi - Power BI Desktop</Label></DocTitle>
        <WindowButtons>
          <Svg w={104} h={14}><P d="M0 7.500H10" s="#111" /><P d="M45.500 4.500H53.500V12.500H45.500ZM47.500 4.500V2.500H55.500V10.500H53.500" s="#111" /><P d="M91 2L101 12M101 2L91 12" s="#111" w={1.100} /></Svg>
        </WindowButtons>
      </TitleBar>
      <TabRow>
        <RibbonTab $w={56} $file><Label $ls={-0.2}>Archivo</Label></RibbonTab>
        <RibbonTab $w={68} $active><Label $ls={-0.1}>Inicio</Label></RibbonTab>
        <RibbonTab $w={55}><Label>Vista</Label></RibbonTab>
        <RibbonTab $w={81}><Label>Modelado</Label></RibbonTab>
        <RibbonTab $w={80}><Label>Ayuda</Label></RibbonTab>
        <Svg w={2} h={1} />
        <ContextTabs>
          <RibbonTab $w={69}><Label>Formato</Label></RibbonTab>
          <RibbonTab $w={114}><Label>Datos y detalles</Label></RibbonTab>
        </ContextTabs>
        <Account>
          <Label $ls={-0.35}>RUBÉN FRANCISCO BUSTILLO CARRASCO</Label>
          <Svg w={54} h={15}><P d="M21 9.500L25 5.500L29 9.500" s="#999" /><circle cx="47" cy="7.500" r="7" fill="#0f78d4" /><P d="M44.700 5.500Q45 3.500 47 3.500Q49.300 3.500 49.300 5.500Q49.300 6.500 47 8V9.500M47 10.500V12" s="#fff" w={1.500} /></Svg>
        </Account>
      </TabRow>

      <Ribbon>
        <RGroup w={159} name="Portapapeles">
          <Big icon="paste" w={53} lines={['Pegar']} off />
          <SmallList $ml={-5}>
            <Small icon={sm.cut} text="Cortar" $gap={2} />
            <Small icon={sm.copy} text="Copiar" $gap={4} $hot />
            <Small icon={sm.brush} text="Copiar formato" $gap={2} />
          </SmallList>
        </RGroup>
        <RGroup w={310} pl={1} name="Datos externos">
          <Big icon="get" w={53} lines={['Obtener', 'datos']} caret />
          <Big icon="recent" w={54} lines={['Orígenes', 'recientes']} caret />
          <Big icon="specify" w={64} lines={['Especificar', 'datos']} />
          <Svg w={1} h={1} />
          <Divider />
          <Big icon="edit" w={69} lines={['Editar', 'consultas']} caret />
          <Divider />
          <Big icon="refresh" w={61} lines={['Actualizar']} />
        </RGroup>
        <RGroup w={344} pl={3} name="Insertar">
          <Big icon="page" w={50} lines={['Nueva', 'página']} caret />
          <Svg w={1} h={1} />
          <Big icon="visual" w={67} lines={['Nuevo', 'objeto visual']} />
          <Big icon="ask" w={61} lines={['Hacer una', 'pregunta']} />
          <Big icon="buttons" w={44} lines={['Botones']} caret />
          <SmallList>
            <Small icon={sm.text} text="Cuadro de texto" />
            <Small icon={sm.image} text="Imagen" $gap={3} />
            <Small icon={sm.shapes} text="Formas" $gap={3} caret />
          </SmallList>
        </RGroup>
        <RGroup w={176} pl={32} name="Objetos visuales personalizados">
          <Big icon="market" w={64} lines={['Desde', 'Marketplace']} />
          <Big icon="file" w={46} lines={['De', 'archivo']} />
        </RGroup>
        <RGroup w={58} name="Temas"><Big icon="theme" w={55} lines={['Cambiar', 'tema']} caret /></RGroup>
        <RGroup w={75} name="Relaciones"><Big icon="relate" w={71} lines={['Administrar', 'relaciones']} /></RGroup>
        <RGroup w={146} pl={2} name="Cálculos">
          <SmallList>
            <Small icon={sm.measure(false)} text="Nueva medida" $gap={3} />
            <Small icon={sm.column} text="Nueva columna" $gap={3} />
            <Small icon={sm.measure(true)} text="Nueva medida rápida" $gap={3} />
          </SmallList>
        </RGroup>
        <RGroup w={62} name="Compartir"><Big icon="publish" w={58} lines={['Publicar']} /></RGroup>
      </Ribbon>

      <Work>
        <Rail>
          <RailItem $on><Svg w={15} h={15}><P d="M.5 0V13.500H14" s="#252423" /><P d="M2.500 3.500H4.500V11.500H2.500ZM6.500 5.500H8.500V11.500H6.500ZM10.500 1.500H12.500V11.500H10.500Z" s="#252423" /></Svg></RailItem>
          <RailItem><Svg w={16} h={15}><P d="M.5 .5H15.500V14.500H.500ZM0 2.500H16M0 6.500H16M0 10.500H16M5.500 3V15M10.500 3V15" s="#605e5c" /></Svg></RailItem>
          <RailItem><Svg w={18} h={18}><P d="M.5 5.500H7.500V12.500H.500ZM.5 7.500H7.500M10.500 .5H17.500V7.500H10.500ZM10.500 2.500H17.500M10.500 10.500H17.500V17.500H10.500ZM10.500 12.500H17.500M4.500 5V2.500H10M4.500 13V15.500H10" s="#605e5c" /></Svg></RailItem>
        </Rail>
        <Center>
          <CanvasRow>
            <Page>
              <Frame>
                <FrameHead>
                  <Label $size={8} $ls={-0.1} $color="#c0bebc">country, gdpPercap, lifeExp, year y pop</Label>
                  <HeadIcons>
                    <Svg w={16} h={16}><P d="M.5 .5H15.500L9.500 7V14.500H6.500V7Z" s="#605e5c" /></Svg>
                    <Svg w={15} h={15} oy={-1}><P d="M7 .5H.500V11.500H13.500V.500H9M11 3L7 7M1 6.500H5.500V11" s="#605e5c" /></Svg>
                    <Svg w={16} h={12}><path d="M0 5h2v2H0zM7 5h2v2H7zM14 5h2v2h-2z" fill="#605e5c" /></Svg>
                  </HeadIcons>
                </FrameHead>
                <BubbleChart />
                <Handle $x={-2} $y={-1} $w={10} $h={3} /><Handle $x={-2} $y={-1} $w={4} $h={9} />
                <Handle $x={428} $y={-1} $w={12} $h={3} /><Handle $x={861} $y={-1} $w={7} $h={3} />
                <Handle $x={-2} $y={234} $w={3} $h={12} /><Handle $x={866} $y={234} $w={3} $h={12} />
                <Handle $x={-2} $y={473} $w={4} $h={9} /><Handle $x={-2} $y={479} $w={10} $h={4} />
                <Handle $x={428} $y={479} $w={12} $h={4} /><Handle $x={860} $y={479} $w={9} $h={4} /><Handle $x={865} $y={473} $w={4} $h={9} />
              </Frame>
            </Page>
            <FilterPane>
              <Collapse><Chev dir="left" c="#333" /></Collapse>
              <Svg w={13} h={12} ox={-2}><P d="M11.500 .5V11.500L6 7.500H1V4.500H6Z" s="#b5722c" /></Svg>
              <Vertical>Filtros</Vertical>
            </FilterPane>
          </CanvasRow>
          <Dots />
          <EditorBar>
            <Label $size={17} $ls={-0.45}>Editor de script R</Label>
            <EditorIcons>
              <Svg w={14}><circle cx="7" cy="7" r="5.800" stroke="#ddd" /><P d="M5.500 4.500L10 7L5.500 9.500Z" s="#ddd" /></Svg>
              <Svg w={14}><circle cx="7" cy="7" r="5" stroke="#ddd" strokeWidth="1.800" strokeDasharray="2.400 1.530" /><circle cx="7" cy="7" r="4" stroke="#ddd" /><circle cx="7" cy="7" r="1.600" stroke="#ddd" /></Svg>
              <Svg w={14}><P d="M1 13L13 1M6 1H13V8" s="#ddd" /></Svg>
              <Svg w={14}><P d="M1 10L7 4L13 10" s="#eee" w={1.200} /></Svg>
            </EditorIcons>
          </EditorBar>
          <PageTabs>
            <PageTab $w={40} $nav><Svg w={5} h={8}><path d="M5 0V8L0 4z" fill="#c4c4c4" /></Svg><Svg w={5} h={8}><path d="M0 0V8L5 4z" fill="#c4c4c4" /></Svg></PageTab>
            <PageTab $w={86}><Label>Página 1</Label></PageTab>
            <PageTab $w={87}><Label>Página 2</Label></PageTab>
            <PageTab $w={88}><Label>Página 3</Label></PageTab>
            <PageTab $w={88} $on><Label $ls={-0.2}>Página 4</Label></PageTab>
            <PageTab $w={39} $add><Svg w={11}><P d="M5.500 0V11M0 5.500H11" s="#777" w={3} /></Svg></PageTab>
          </PageTabs>
        </Center>

        <Panel $w={234}>
          <PanelHead $h={50}><Label $size={15.500} $weight={600} $color="#444" $ls={-0.25}>Visualizaciones</Label><Chev dir="right" /></PanelHead>
          <Gallery>{gallery}</Gallery>
          <ModeTabs>
            <Mode $on><Svg w={21} h={20}><P d="M1 .5H16" s="#222" /><path d="M.5 3.500H20.500V10.500H.500ZM.5 12.500H20.500V18.500H.500Z" stroke="#222" strokeDasharray="2 1" /></Svg></Mode>
            <Mode><Svg w={19} h={21}><P d="M.5 .5H15.500V4.500H.500ZM15.500 2.500H18V7.500H8.500V11M6.500 11.500H11V20.500H6.500Z" s="#222" w={1.200} /></Svg></Mode>
            <Mode><Svg w={21} h={21}><circle cx="9" cy="8.500" r="8" stroke="#222" strokeWidth="1.200" /><P d="M1 9L6 5L10 7L16 3M5.500 9V14M8.500 10V16M11.500 9V16M14.500 8V13M15 14L20.500 19.500" s="#222" w={1.200} /></Svg></Mode>
          </ModeTabs>
          <Scroller>
            <ScrollBody>
              <WellTitle><Label>Valores</Label></WellTitle>
              <Well $h={137}>
                {['country', 'gdpPercap', 'lifeExp', 'year', 'pop'].map((f, i) => (
                  <Pill key={f}><Label $ls={-0.25}>{f}</Label><Grow /><Chev c={i % 2 ? '#a8703c' : '#4a7ea8'} /><Svg w={8} h={8}><P d="M0 0L8 8M8 0L0 8" s="#504a55" w={1.100} /></Svg></Pill>
                ))}
              </Well>
              <Drill>
                <DrillTitle><Label $ls={-0.3}>Obtener detalles</Label></DrillTitle>
                <DrillRow $h={16}><Label $ls={-0.4}>Entre varios informes</Label></DrillRow>
                <DrillRow $h={42} $pl={9}><Label $ls={-0.4}>Desactivar</Label><Svg w={30} h={12}><circle cx="6" cy="6" r="5" stroke="#605e5c" strokeWidth="1.800" /><P d="M11 6H30" s="#605e5c" w={1.800} /></Svg></DrillRow>
                <DrillRow $h={27}><Label $ls={-0.3}>Mantener todos los filtros</Label></DrillRow>
                <DrillRow $h={32} $pl={9}><Label $ls={-0.3}>Activar</Label><Svg w={30} h={12}><P d="M0 6H20" s="#605e5c" w={1.800} /><circle cx="24" cy="6" r="6" fill="#605e5c" /></Svg></DrillRow>
              </Drill>
              <DrillRow $h={5} />
              <Well $h={32} $full><DrillRow $h={20} $pl={6}><Label $ls={-0.2}>Agregue los campos de obtención d...</Label></DrillRow></Well>
            </ScrollBody>
            <Thumb />
          </Scroller>
        </Panel>

        <Panel $w={181}>
          <PanelHead $h={49}><Label $size={15.500} $weight={600} $color="#444" $ls={-0.3}>Campos</Label><Chev dir="right" /></PanelHead>
          <Search><Svg w={17} h={16}><circle cx="10.500" cy="5.500" r="5" stroke="#444" /><P d="M7 9L.5 15.500" s="#444" /></Svg><Label $ls={-0.2}>Buscar</Label></Search>
          <FieldList>
            <TableRow><Chev c="#a8703c" /><TableIcon><TableGlyph /></TableIcon><Label $ls={-0.3}>country_codes</Label></TableRow>
            <TableRow $on $mb={5}><Chev dir="up" /><TableIcon><TableGlyph /><Badge><Svg w={12}><circle cx="6" cy="6" r="6" fill={C.yellow} /><P d="M3.500 6L5.500 8L9 4.500" s="#222" w={1.600} /></Svg></Badge></TableIcon><Label $weight={600} $ls={-0.4}>gapminder</Label></TableRow>
            <Field name="continent" /><Field name="country" on /><Field name="gdpPercap" on sum /><Field name="lifeExp" on sum /><Field name="pop" on sum hot /><Field name="year" on sum />
            <TableRow $mt={2} $mb={5}><Chev dir="up" /><TableIcon><TableGlyph /></TableIcon><Label $ls={-0.3}>gapminder_unfilt...</Label></TableRow>
            <Field name="continent" /><Field name="country" /><Field name="gdp" sum /><Field name="year" sum />
          </FieldList>
        </Panel>
      </Work>
      <Status><Label $size={11.500} $ls={-0.4}>PÁGINA 4 DE 4</Label></Status>
    </Shell>
  );
}
